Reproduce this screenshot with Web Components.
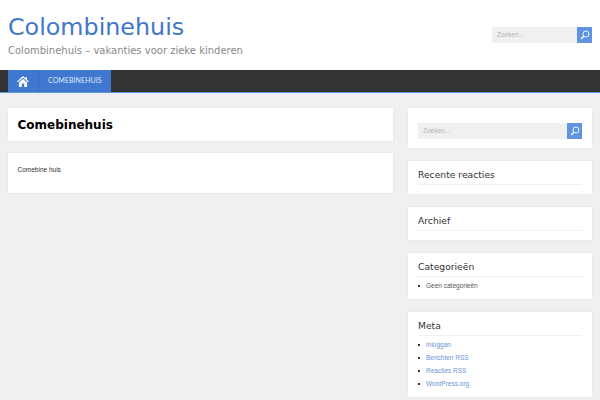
<!DOCTYPE html>
<html><head><meta charset="utf-8">
<style>html,body{margin:0;padding:0;height:400px;overflow:hidden;background:#f0f0f0;font-family:"Liberation Sans",sans-serif}</style>
</head><body>
<template id="t-header"><style>
:host{display:flex;justify-content:space-between;background:#fff;height:70px;padding:0 8px;box-sizing:border-box}
.t{font:23.8px/28px "DejaVu Sans",sans-serif;color:#4078c8;padding-top:13px}
.s{font:10px/14px "DejaVu Sans",sans-serif;color:#888;margin-top:3px}
site-search{margin-top:27px}
</style><div><div class="t">Colombinehuis</div><div class="s">Colombinehuis – vakanties voor zieke kinderen</div></div><site-search style="width:100px"></site-search></template>
<template id="t-search"><style>
:host{display:flex;height:16px}
.i{flex:1;background:#f0f0f0;color:#b4b4b4;font:6.500px/16px "Liberation Sans",sans-serif;padding-left:5px}
.b{width:15px;background:#6094e0;display:flex;align-items:center;justify-content:center}
</style><div class="i">Zoeken...</div><div class="b"><svg width="10" height="10" viewBox="0 0 10 10" fill="none" stroke="#fff" stroke-width=".9"><circle cx="6" cy="4" r="3"/><path d="M3.800 6.200 1 9" stroke-width="1.300"/></svg></div></template>
<template id="t-nav"><style>
:host{display:flex;height:22px;background:#333;border-bottom:1px solid #6094e0;padding-left:8px}
.h{width:30px;background:#4078d0;display:flex;align-items:center;justify-content:center;border-right:1px solid #3a6cbc}
.m{background:#4078d0;color:#dde8f8;font:7.100px/22px Lato,sans-serif;padding:0 9px 0 9px}
</style><div class="h"><svg width="12" height="11" viewBox="0 0 12 11" fill="#fff"><path d="M6 0 0 5.500 .8 6.300 6 1.800 11.200 6.300 12 5.500 10 3.700V1H8.500V2.400Z"/><path d="M6 2.900 1.900 6.500V11H4.800V7.500H7.200V11H10.100V6.500Z"/></svg></div><div class="m">COMEBINEHUIS</div></template>
<template id="t-card"><style>
:host{display:block;background:#fff;box-shadow:0 0 0 1px #ebebeb;box-sizing:border-box}
</style><slot></slot></template>
<template id="t-widget"><style>
:host{display:block;background:#fff;box-shadow:0 0 0 1px #ebebeb;padding:5px 10px 0;box-sizing:border-box}
h3{margin:0;font:500 9.200px/17px "DejaVu Sans",sans-serif;color:#333;padding-bottom:2px;border-bottom:1px solid #f0f0f0;height:16px}
ul{margin:0;padding:2px 0 0;list-style:none;font:6.500px/13px "Liberation Sans",sans-serif;color:#555}
::slotted(li){display:flex;align-items:center}
::slotted(li)::before{content:"";width:2px;height:2px;background:#333;margin-right:6px}
</style><h3><slot name="title"></slot></h3><ul><slot></slot></ul></template>
<site-header></site-header><site-nav></site-nav>
<div style="display:flex;gap:15px;padding:15px 8px 0">
<main style="width:385px;display:flex;flex-direction:column;gap:12px">
<content-card style="height:33px;padding:9px 9.500px;font:bold 12px/16px 'DejaVu Sans',sans-serif;color:#000">Comebinehuis</content-card>
<content-card style="height:40px;padding:12px 9.500px;font:6.500px/10px 'Liberation Sans',sans-serif;color:#333">Comebine huis</content-card>
</main>
<aside style="width:184px;display:flex;flex-direction:column;gap:13px">
<content-card style="height:40px;padding:15px 10px 0"><site-search></site-search></content-card>
<side-widget style="height:33px"><span slot="title">Recente reacties</span></side-widget>
<side-widget style="height:33px"><span slot="title">Archief</span></side-widget>
<side-widget style="height:46px"><span slot="title">Categorieën</span><li>Geen categorieën</li></side-widget>
<side-widget style="height:85px"><span slot="title">Meta</span><li style="color:#6b93d6">Inloggan</li><li style="color:#6b93d6">Berichten RSS</li><li style="color:#6b93d6">Reacties RSS</li><li style="color:#6b93d6">WordPress.org</li></side-widget>
</aside></div>
<script>
for(const [n,t] of [['site-header','t-header'],['site-search','t-search'],['site-nav','t-nav'],['content-card','t-card'],['side-widget','t-widget']]){
customElements.define(n,class extends HTMLElement{constructor(){super();this.attachShadow({mode:'open'}).appendChild(document.getElementById(t).content.cloneNode(true))}})}
</script>
</body></html>
